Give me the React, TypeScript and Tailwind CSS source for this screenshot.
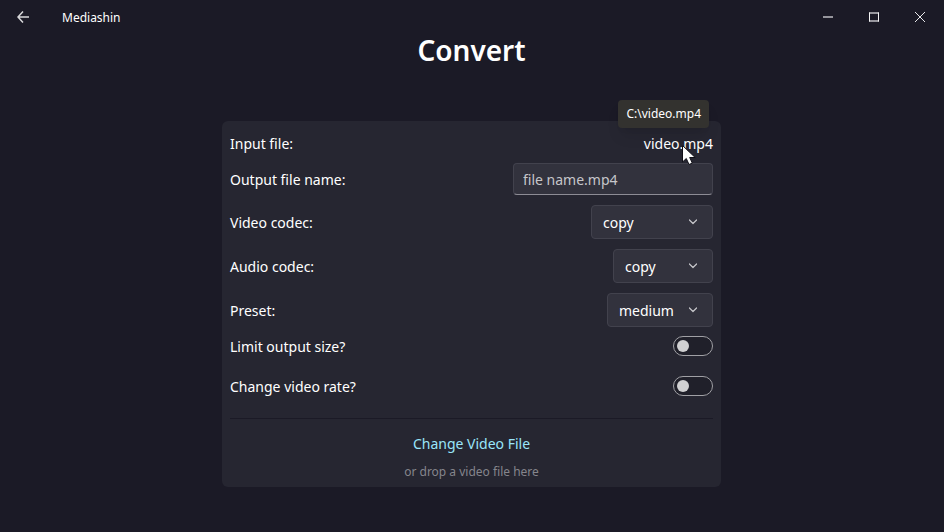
import type { ReactNode } from "react";

function SelectField({ id, options, width }: { id: string; options: string[]; width: string }) {
  return (
    <div className={`relative ${width}`}>
      <select
        id={id}
        className="block h-[34px] w-full appearance-none rounded border border-[#42424d] bg-[#32323d] pl-[11px] pt-0.5 text-sm text-white outline-none"
      >
        {options.map((o) => (
          <option key={o}>{o}</option>
        ))}
      </select>
      <svg
        className="pointer-events-none absolute right-4 top-3 h-2 w-2"
        viewBox="0 0 8 8"
        fill="none"
        stroke="#c8c8cc"
        strokeWidth="1.2"
        strokeLinecap="round"
        strokeLinejoin="round"
      >
        <path d="M0.4 3 4 6.500 7.600 3" />
      </svg>
    </div>
  );
}

function Row({ id, label, children }: { id: string; label: string; children: ReactNode }) {
  return (
    <div className="flex items-center justify-between">
      <label htmlFor={id} className="pt-0.5 leading-5">
        {label}
      </label>
      {children}
    </div>
  );
}

function Toggle({ id }: { id: string }) {
  return (
    <span className="relative flex h-5 w-10">
      <input
        id={id}
        type="checkbox"
        role="switch"
        className="peer h-5 w-10 appearance-none rounded-full border border-[#a0a0a5] bg-[#20202a]"
      />
      <span className="pointer-events-none absolute left-1 top-1 h-3 w-3 rounded-full bg-[#d0d0d2] peer-checked:left-6" />
    </span>
  );
}

export default function App() {
  return (
    <div className="min-h-screen bg-[#1b1a26] pr-px font-['Noto_Sans',sans-serif] text-sm text-white">
      <header className="flex h-[34px] items-center justify-between">
        <div className="flex items-center">
          <button aria-label="Back" className="flex h-[34px] w-[46px] items-center justify-center">
            <svg className="h-3 w-3" viewBox="0 0 12 12" fill="none" stroke="#d8d8da" strokeWidth="1.5">
              <path d="M12 6H1M6 .6 1 6 6 11.4" />
            </svg>
          </button>
          <span className="pl-4 pt-0.5 text-xs">Mediashin</span>
        </div>
        <div className="flex">
          <button aria-label="Minimize" className="flex h-8 w-[46px] items-center justify-center">
            <svg className="h-[10px] w-[10px]" viewBox="0 0 10 10" stroke="#96959c" strokeWidth="2">
              <path d="M0 5h10" />
            </svg>
          </button>
          <button aria-label="Maximize" className="flex h-8 w-[46px] items-center justify-center">
            <svg className="h-[10px] w-[10px]" viewBox="0 0 10 10" fill="none">
              <path d="M0 1h10M0 9h10" stroke="#96959c" strokeWidth="2" />
              <path d="M.5 0.500v9M9.500 .5v9" stroke="#f4f4f5" />
            </svg>
          </button>
          <button aria-label="Close" className="flex h-8 w-[46px] items-center justify-center">
            <svg className="h-[10px] w-[10px]" viewBox="0 0 10 10" stroke="#e8e8ea">
              <path d="M0 0l10 10M10 0 0 10" />
            </svg>
          </button>
        </div>
      </header>

      <main>
        <h1 className="text-center text-[28px] font-semibold leading-8">Convert</h1>
        <section className="mx-auto mt-[55px] flex max-w-[499px] flex-col gap-[10px] rounded-md bg-[#262631] px-2 pb-[5px] pt-3">
          <div className="flex justify-between pt-px leading-5">
            <span>Input file:</span>
            <span className="relative">
              video.mp4
              <span
                role="tooltip"
                className="absolute -top-[34px] right-1 flex h-7 items-center whitespace-nowrap rounded bg-[#33322f] px-2 text-xs shadow-lg"
              >
                C:\video.mp4
              </span>
              <svg className="absolute left-[38px] top-[11px] h-5 w-[14px]" viewBox="0 0 14 20">
                <path
                  d="M.5.5v16.500l3.800-3.500 2.700 6 3.300-1.400-2.600-5.600h5.500z"
                  fill="#fff"
                  stroke="#111018"
                  strokeWidth="1"
                />
              </svg>
            </span>
          </div>
          <div className="-mt-px flex flex-col gap-[10px]">
            <Row id="output" label="Output file name:">
              <input
                id="output"
                type="text"
                placeholder="file name.mp4"
                className="h-8 w-[200px] rounded border border-[#42424d] border-b-[#8d8c95] bg-[#32323d] px-[9px] text-sm outline-none placeholder:text-[#c6c6ca]"
              />
            </Row>
            <Row id="video" label="Video codec:">
              <SelectField id="video" options={["copy", "h264", "hevc"]} width="w-[122px]" />
            </Row>
            <Row id="audio" label="Audio codec:">
              <SelectField id="audio" options={["copy", "aac", "mp3"]} width="w-[100px]" />
            </Row>
            <Row id="preset" label="Preset:">
              <SelectField id="preset" options={["medium", "fast", "slow"]} width="w-[106px]" />
            </Row>
          </div>
          <div className="-mt-0.5 flex flex-col gap-[18px]">
            <Row id="limit" label="Limit output size?">
              <Toggle id="limit" />
            </Row>
            <Row id="rate" label="Change video rate?">
              <Toggle id="rate" />
            </Row>
            <hr className="mt-[3px] border-[#1b1a26]" />
          </div>
          <div className="flex flex-col items-center gap-2 pt-[5px]">
            <button className="leading-5 text-[#99e5f9]">Change Video File</button>
            <p className="text-xs leading-5 text-[#85858c]">or drop a video file here</p>
          </div>
        </section>
      </main>
    </div>
  );
}
